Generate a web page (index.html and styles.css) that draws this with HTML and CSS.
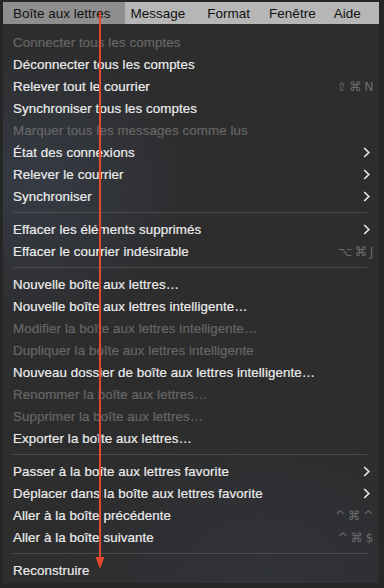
FILE: index.html
```html
<!DOCTYPE html>
<html lang="fr">
<head>
  <meta charset="UTF-8" />
  <title>Boîte aux lettres</title>
  <link rel="stylesheet" href="styles.css">
</head>
<body>

  <div class="screen">
    <div class="menubar">
      <span class="active">Boîte aux lettres</span>
      <span class="m-message">Message</span>
      <span class="m-format">Format</span>
      <span class="m-window">Fenêtre</span>
      <span class="m-help">Aide</span>
    </div>

    <div class="menu">
      <div class="item off">Connecter tous les comptes</div>
      <div class="item">Déconnecter tous les comptes</div>
      <div class="item">Relever tout le courrier <span class="key">⇧⌘N</span></div>
      <div class="item">Synchroniser tous les comptes</div>
      <div class="item off">Marquer tous les messages comme lus</div>
      <div class="item">État des connexions <svg class="sub" width="7" height="11" viewBox="0 0 7 11"><polyline points="1.2,1 5.8,5.5 1.2,10" /></svg></div>
      <div class="item">Relever le courrier <svg class="sub" width="7" height="11" viewBox="0 0 7 11"><polyline points="1.2,1 5.8,5.5 1.2,10" /></svg></div>
      <div class="item">Synchroniser <svg class="sub" width="7" height="11" viewBox="0 0 7 11"><polyline points="1.2,1 5.8,5.5 1.2,10" /></svg></div>
      <div class="sep"></div>
      <div class="item">Effacer les éléments supprimés <svg class="sub" width="7" height="11" viewBox="0 0 7 11"><polyline points="1.2,1 5.8,5.5 1.2,10" /></svg></div>
      <div class="item">Effacer le courrier indésirable <span class="key">⌥⌘J</span></div>
      <div class="sep"></div>
      <div class="item">Nouvelle boîte aux lettres…</div>
      <div class="item">Nouvelle boîte aux lettres intelligente…</div>
      <div class="item off">Modifier la boîte aux lettres intelligente…</div>
      <div class="item off">Dupliquer la boîte aux lettres intelligente</div>
      <div class="item">Nouveau dossier de boîte aux lettres intelligente…</div>
      <div class="item off">Renommer la boîte aux lettres…</div>
      <div class="item off">Supprimer la boîte aux lettres…</div>
      <div class="item">Exporter la boîte aux lettres…</div>
      <div class="sep"></div>
      <div class="item">Passer à la boîte aux lettres favorite <svg class="sub" width="7" height="11" viewBox="0 0 7 11"><polyline points="1.2,1 5.8,5.5 1.2,10" /></svg></div>
      <div class="item">Déplacer dans la boîte aux lettres favorite <svg class="sub" width="7" height="11" viewBox="0 0 7 11"><polyline points="1.2,1 5.8,5.5 1.2,10" /></svg></div>
      <div class="item">Aller à la boîte précédente <span class="key">^⌘^</span></div>
      <div class="item">Aller à la boîte suivante <span class="key">^⌘$</span></div>
      <div class="sep"></div>
      <div class="item">Reconstruire</div>
    </div>

    <svg class="arrow" width="20" height="580" viewBox="0 0 20 580">
      <line x1="10" y1="10" x2="10" y2="558" stroke="#e5472f" stroke-width="2" />
      <polygon points="5.5,555 14.5,555 10,567" fill="#e5472f" />
    </svg>
  </div>

</body>
</html>
```

FILE: styles.css
```css
* {
  box-sizing: border-box;
}

body {
  margin: 0;
  background-color: #262626;
  font-family: "Liberation Sans", Arial, sans-serif;
}

.screen {
  position: relative;
  width: 384px;
  height: 588px;
  padding: 2px 5px 5px 3px;
  background-color: #262626;
}

.menubar {
  display: flex;
  height: 22px;
  background-color: #b6b6b6;
  color: #111;
  font-size: 13.5px;
  align-items: stretch;
}

.menubar span {
  display: flex;
  align-items: center;
}

.menubar .active {
  padding: 0 14px 0 10px;
  background-color: #8e8e8e;
}

.m-message {
  margin-left: 6px;
}

.m-format {
  margin-left: 22px;
}

.m-window {
  margin-left: 19px;
}

.m-help {
  margin-left: 18px;
}

.menu {
  height: 559px;
  padding: 7px 0 0;
  background-color: #2d2d2e;
  background-image:
    radial-gradient(ellipse 160px 140px at 30px 160px, rgba(70, 85, 110, 0.35), transparent),
    radial-gradient(ellipse 200px 160px at 260px 560px, rgba(60, 70, 90, 0.25), transparent);
}

.item {
  display: flex;
  align-items: center;
  justify-content: space-between;
  height: 22px;
  padding: 0 5px 0 10px;
  color: #ececec;
  font-size: 13.3px;
  letter-spacing: 0.1px;
  -webkit-text-stroke: 0.2px;
}

.item.off {
  color: #676767;
}

.key {
  color: #6c6c6c;
  font-family: "DejaVu Sans", sans-serif;
  font-size: 12.5px;
  letter-spacing: 2.5px;
  margin-right: -2px;
  -webkit-text-stroke: 0;
}

.sub {
  margin-right: 4px;
  fill: none;
  stroke: #e6e6e6;
  stroke-width: 1.7;
}

.sep {
  height: 1px;
  margin: 5px 12px 5px 10px;
  background-color: #4c4c4c;
}

.arrow {
  position: absolute;
  left: 90px;
  top: 2px;
}
```
